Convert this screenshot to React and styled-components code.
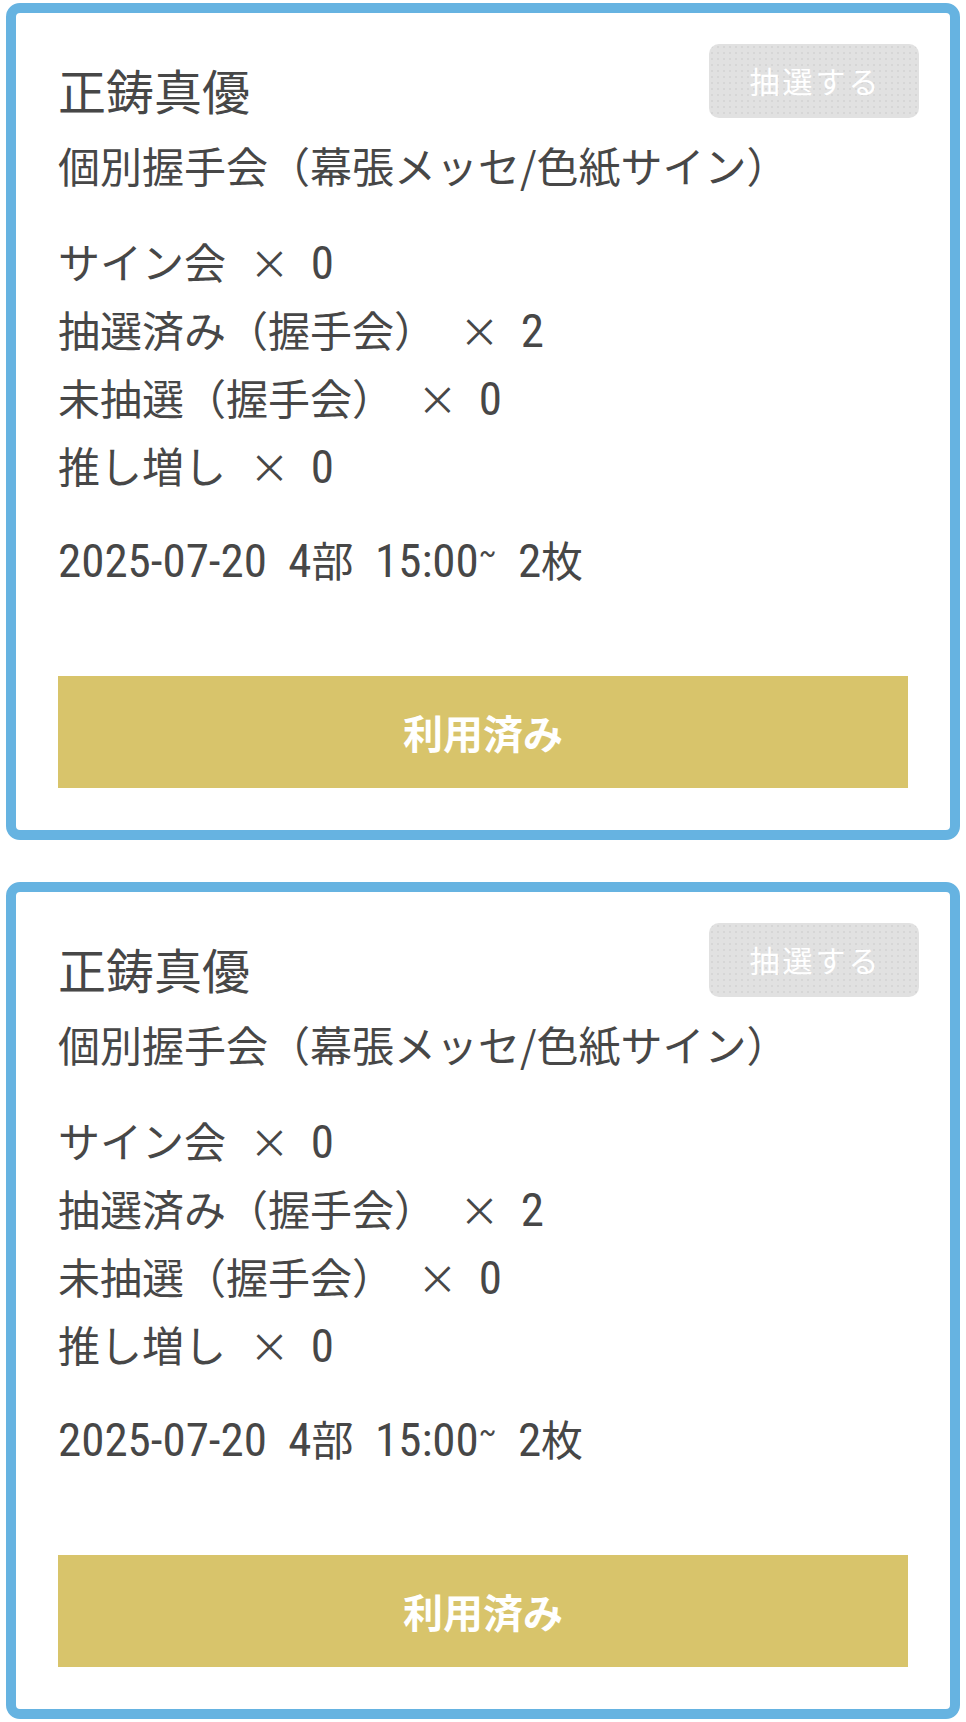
import React from "react";
import styled, { createGlobalStyle } from "styled-components";

const GlobalStyle = createGlobalStyle`
  html, body {
    margin: 0;
    padding: 0;
    background: #ffffff;
  }
  body {
    font-family: "Noto Sans CJK JP", "Noto Sans", sans-serif;
    color: #474747;
  }
`;

const Page = styled.div`
  display: flex;
  flex-direction: column;
  gap: 42px;
  padding: 3px 6px 2px;
`;

const Card = styled.section`
  position: relative;
  background: #ffffff;
  border: 10px solid #66b3e1;
  border-radius: 14px;
  padding: 42px 42px 42px;
  display: flex;
  flex-direction: column;
`;

const DrawButton = styled.button`
  position: absolute;
  top: 31px;
  right: 31px;
  width: 210px;
  height: 74px;
  border: none;
  border-radius: 10px;
  background-color: #e1e1e1;
  background-image: radial-gradient(rgba(0, 0, 0, 0.05) 0.8px, transparent 1px);
  background-size: 6px 6px;
  color: #ffffff;
  font-family: "Noto Sans CJK JP", sans-serif;
  font-size: 30px;
  letter-spacing: 3px;
  display: flex;
  align-items: center;
  justify-content: center;
  padding: 0 0 2px 3px;
  cursor: default;
`;

const Title = styled.h2`
  margin: 0;
  font-size: 48px;
  line-height: 69px;
  font-weight: 400;
`;

const Subtitle = styled.p`
  margin: 11px 0 0;
  font-size: 42px;
  line-height: 60px;
  white-space: nowrap;
`;

const ItemList = styled.ul`
  list-style: none;
  margin: 32px 0 0;
  padding: 0;
`;

const Item = styled.li`
  font-size: 42px;
  line-height: 68px;
  height: 68px;
  white-space: nowrap;
`;

const Num = styled.span`
  font-family: "Roboto Condensed", "Roboto", sans-serif;
  font-stretch: condensed;
  font-weight: 400;
  font-size: 47px;
  line-height: 1;
`;

const Mult = styled.span`
  font-family: "Noto Sans CJK JP", sans-serif;
  font-size: 40px;
  line-height: 1;
  margin: 0 12px 0 14px;
`;

const Tilde = styled.span`
  font-size: 30px;
  line-height: 1;
  vertical-align: 14px;
`;

const DateLine = styled.p`
  margin: 26px 0 0;
  font-size: 42px;
  line-height: 68px;
  height: 68px;
  white-space: nowrap;
  word-spacing: 12px;
`;

const UsedButton = styled.button`
  margin-top: 83px;
  height: 112px;
  width: 100%;
  border: none;
  border-radius: 0;
  background: #d8c46b;
  color: #ffffff;
  font-family: "Noto Sans CJK JP", sans-serif;
  font-size: 40px;
  font-weight: 700;
  display: flex;
  align-items: center;
  justify-content: center;
  cursor: default;
`;

const tickets = [
  {
    id: 1,
    member: "正鋳真優",
    event: "個別握手会（幕張メッセ/色紙サイン）",
    items: [
      { label: "サイン会", count: 0 },
      { label: "抽選済み（握手会）", count: 2 },
      { label: "未抽選（握手会）", count: 0 },
      { label: "推し増し", count: 0 },
    ],
    date: "2025-07-20",
    part: 4,
    time: "15:00",
    sheets: 2,
  },
  {
    id: 2,
    member: "正鋳真優",
    event: "個別握手会（幕張メッセ/色紙サイン）",
    items: [
      { label: "サイン会", count: 0 },
      { label: "抽選済み（握手会）", count: 2 },
      { label: "未抽選（握手会）", count: 0 },
      { label: "推し増し", count: 0 },
    ],
    date: "2025-07-20",
    part: 4,
    time: "15:00",
    sheets: 2,
  },
];

function TicketCard({ t }) {
  return (
    <Card>
      <DrawButton type="button" disabled>
        抽選する
      </DrawButton>
      <Title>{t.member}</Title>
      <Subtitle>{t.event}</Subtitle>
      <ItemList>
        {t.items.map((it) => (
          <Item key={it.label}>
            {it.label} <Mult>×</Mult> <Num>{it.count}</Num>
          </Item>
        ))}
      </ItemList>
      <DateLine>
        <Num>{t.date}</Num> <Num>{t.part}</Num>部{" "}
        <Num>
          {t.time}
          <Tilde>~</Tilde>
        </Num>{" "}
        <Num>{t.sheets}</Num>枚
      </DateLine>
      <UsedButton type="button">利用済み</UsedButton>
    </Card>
  );
}

export default function App() {
  return (
    <>
      <GlobalStyle />
      <Page>
        {tickets.map((t) => (
          <TicketCard key={t.id} t={t} />
        ))}
      </Page>
    </>
  );
}
